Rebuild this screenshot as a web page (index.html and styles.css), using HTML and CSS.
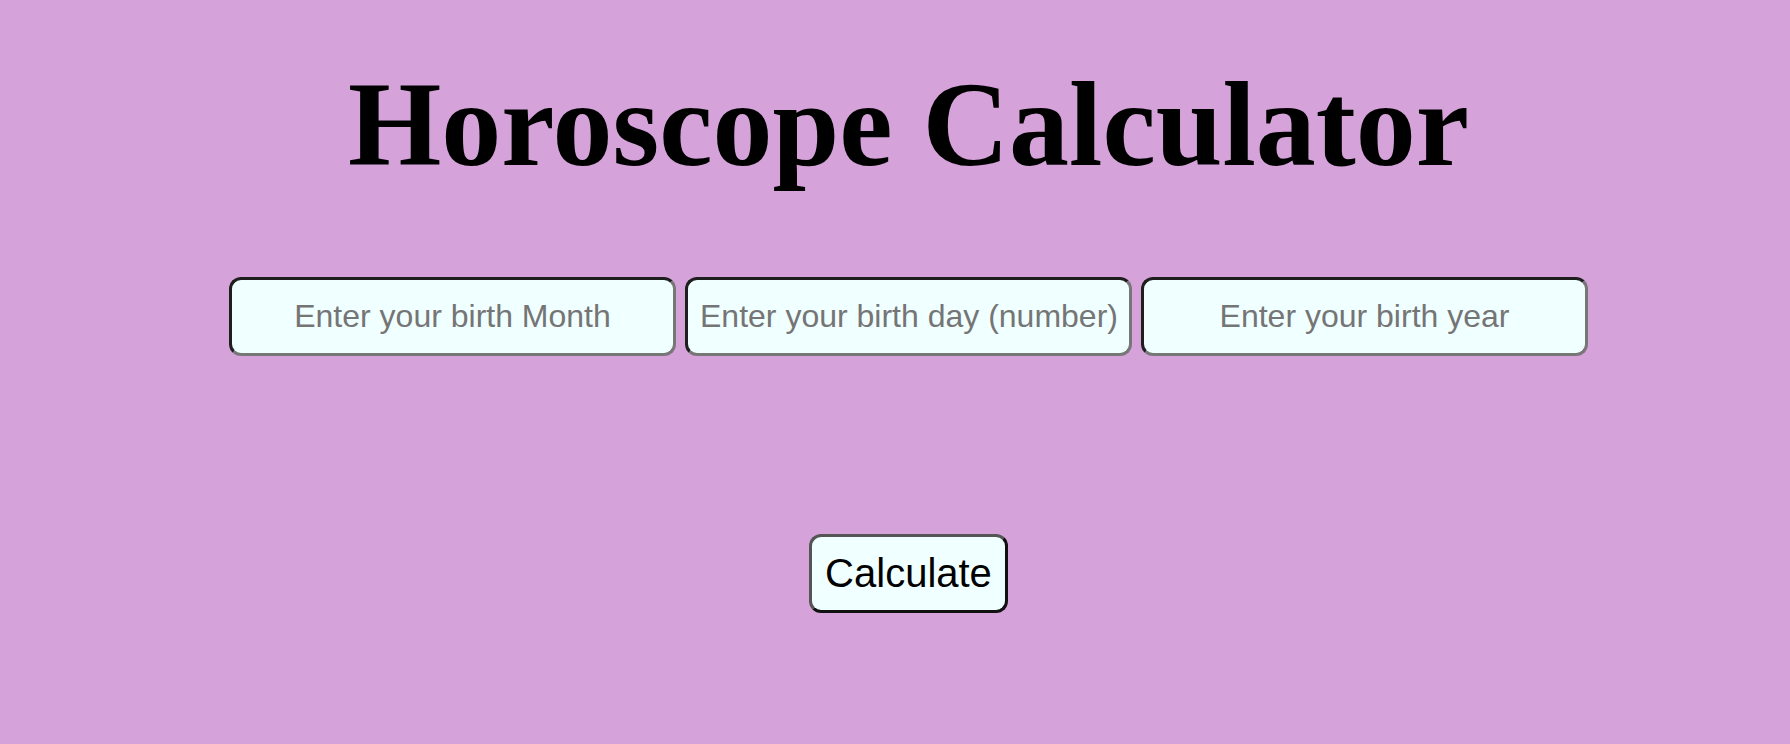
FILE: index.html
```html
<!DOCTYPE html>
<html lang="en">
<head>
<meta charset="utf-8">
<title>Horoscope Calculator</title>
<link rel="stylesheet" href="styles.css">
</head>
<body>
<main class="page">
  <h1 class="title">Horoscope Calculator</h1>
  <div class="fields">
    <input class="field" type="text" placeholder="Enter your birth Month">
    <input class="field" type="text" placeholder="Enter your birth day (number)">
    <input class="field" type="text" placeholder="Enter your birth year">
  </div>
  <div class="actions">
    <button class="btn" type="button">Calculate</button>
  </div>
</main>
</body>
</html>
```

FILE: styles.css
```css
html, body {
  margin: 0;
  background: #d5a3d9;
}

.page {
  padding: 56px 0 0 27px;
  text-align: center;
}

.title {
  margin: 0 0 83px;
  font-family: "Liberation Serif", "Times New Roman", serif;
  font-weight: bold;
  font-size: 120px;
  line-height: 138px;
  color: #000;
}

.fields {
  display: flex;
  justify-content: center;
  gap: 9px;
}

.field {
  box-sizing: border-box;
  width: 447px;
  height: 79px;
  margin: 0;
  padding: 0 12px;
  border: 3px solid;
  border-color: #1e1e1e #777777 #777777 #1e1e1e;
  border-radius: 12px;
  background: #f0ffff;
  font-family: "Liberation Sans", Arial, sans-serif;
  font-size: 32px;
  text-align: center;
  color: #000;
  outline: none;
}

.field::placeholder {
  color: #757575;
  opacity: 1;
}

.actions {
  display: flex;
  justify-content: center;
  margin-top: 178px;
}

.btn {
  box-sizing: border-box;
  width: 199px;
  height: 79px;
  margin: 0;
  padding: 0 10px;
  border: 3px solid;
  border-color: #555555 #111111 #111111 #555555;
  border-radius: 12px;
  background: #f0ffff;
  font-family: "Liberation Sans", Arial, sans-serif;
  font-size: 40px;
  color: #000;
}
```
